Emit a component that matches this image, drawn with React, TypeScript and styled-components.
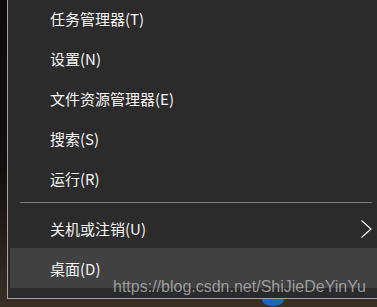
import React from "react";
import styled, { createGlobalStyle } from "styled-components";

const Global = createGlobalStyle`
  html, body { margin: 0; padding: 0; }
  body {
    background: #1a1412;
    font-family: "Noto Sans CJK SC", "Noto Sans", sans-serif;
  }
`;

const Screen = styled.div`
  position: relative;
  width: 377px;
  height: 307px;
  overflow: hidden;
  background: linear-gradient(180deg, #0e0a0a 0%, #140f0e 55%, #2c231c 85%, #3b3025 100%);
`;

const Menu = styled.div`
  position: relative;
  z-index: 1;
  margin-top: -2px;
  margin-left: 7px;
  width: 372px;
  padding: 0 2px 10px 2px;
  background: #2b2b2b;
  border-left: 1px solid #a3a3a3;
  border-bottom: 1px solid #a3a3a3;
  display: flex;
  flex-direction: column;
`;

const Row = styled.div<{ $active?: boolean }>`
  height: 40px;
  display: flex;
  align-items: center;
  padding: 1px 10px 0 40px;
  box-sizing: border-box;
  background: ${(p) => (p.$active ? "#414141" : "transparent")};
  color: #f4f4f4;
  font-size: 15px;
  white-space: nowrap;
`;

const Label = styled.span`
  flex: 1;
`;

const Separator = styled.div`
  height: 1px;
  margin: 4px 10px 5px 10px;
  background: #7f7f7f;
`;

const Watermark = styled.div`
  position: absolute;
  z-index: 2;
  left: 113px;
  top: 278px;
  font-family: "Liberation Sans", Arial, sans-serif;
  font-size: 16px;
  line-height: 18px;
  color: rgba(200, 200, 200, 0.7);
  white-space: nowrap;
`;

const DesktopIcon = styled.div`
  position: absolute;
  left: 262px;
  top: 294px;
  width: 22px;
  height: 12px;
  border-radius: 50%;
  background: #1d64c4;
`;

const Chevron = () => (
  <svg width="11" height="18" viewBox="0 0 11 18" style={{ display: "block" }}>
    <polyline points="0.5,0.5 10,9 0.5,17.5" fill="none" stroke="#ffffff" strokeWidth="1.1" />
  </svg>
);

const items = ["任务管理器(T)", "设置(N)", "文件资源管理器(E)", "搜索(S)", "运行(R)"];

export default function App() {
  return (
    <>
      <Global />
      <Screen>
        <DesktopIcon />
        <Menu>
          {items.map((t) => (
            <Row key={t}>
              <Label>{t}</Label>
            </Row>
          ))}
          <Separator />
          <Row>
            <Label>关机或注销(U)</Label>
            <Chevron />
          </Row>
          <Row $active>
            <Label>桌面(D)</Label>
          </Row>
        </Menu>
        <Watermark>https://blog.csdn.net/ShiJieDeYinYu</Watermark>
      </Screen>
    </>
  );
}
